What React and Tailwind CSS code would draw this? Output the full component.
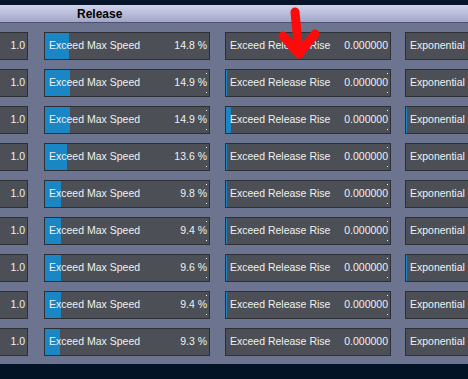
const rows = [
    { speed: 14.8, riseFill: 0, exp: 0 },
    { speed: 14.9, riseFill: 1, exp: 0 },
    { speed: 14.9, riseFill: 5, exp: 1 },
    { speed: 13.6, riseFill: 1, exp: 0 },
    { speed: 9.8, riseFill: 1, exp: 0 },
    { speed: 9.4, riseFill: 1, exp: 0 },
    { speed: 9.6, riseFill: 1, exp: 1 },
    { speed: 9.4, riseFill: 1, exp: 0 },
    { speed: 9.3, riseFill: 0, exp: 0 },
];

const font = { fontFamily: '"Liberation Sans", Arial, sans-serif' };

const Box = ({ className = '', fill = 0, dots = false, children }) => (
    <div className={`relative shrink-0 h-[28px] bg-[#4c5056] border border-[#2c3036] text-[#eef0f2] text-[10.5px] flex items-center overflow-hidden ${className}`}>
        {fill > 0 && (
            <div className="absolute left-0 top-0 bottom-0 bg-[#1b86c4]" style={{ width: fill }} />
        )}
        {dots && (
            <>
                <span className="absolute right-[2px] top-[3px] w-[1px] h-[1px] bg-white" />
                <span className="absolute right-[2px] bottom-[3px] w-[1px] h-[1px] bg-white" />
            </>
        )}
        <div className="relative flex w-full items-center justify-between pl-[4px] pr-[2px]">{children}</div>
    </div>
);

export default function App() {
    return (
        <div className="w-[468px] h-[379px] overflow-hidden bg-[#6d7490] relative" style={font}>
            <div className="h-[5px] bg-[#07152a]" />
            <div className="h-[18px] bg-gradient-to-b from-[#d0d3ec] to-[#a3a8c8] border-b border-[#4c5270] flex items-center pl-[77px]">
                <span className="text-[12px] font-bold text-black">Release</span>
            </div>
            <div className="flex flex-col gap-[9px] pt-[9px] pb-[8px]">
                {rows.map((r, i) => (
                    <div key={i} className="flex w-max">
                        <Box className="w-[28px] border-l-0">
                            <span />
                            <span>1.0</span>
                        </Box>
                        <Box className="w-[166px] ml-[16px]" fill={Math.round(r.speed / 100 * 165)} dots={i > 0 && i < 8}>
                            <span>Exceed Max Speed</span>
                            <span>{r.speed} %</span>
                        </Box>
                        <Box className="w-[166px] ml-[15px]" fill={r.riseFill} dots={i > 0 && i < 8}>
                            <span>Exceed Release Rise</span>
                            <span>0.000000</span>
                        </Box>
                        <Box className="w-[120px] ml-[14px]" fill={r.exp}>
                            <span className="whitespace-nowrap">Exponential</span>
                        </Box>
                    </div>
                ))}
            </div>
            <div className="h-[15px] bg-[#021326]" />
            <svg className="absolute left-0 top-0" width="468" height="379" viewBox="0 0 468 379" fill="none">
                <g stroke="#ff0a0a" strokeWidth="9" strokeLinecap="round" strokeLinejoin="round">
                    <path d="M295 12 Q297 32 299 54" />
                    <path d="M283 36 Q292 46 299 54 Q307 44 315 34" />
                </g>
            </svg>
        </div>
    );
}
